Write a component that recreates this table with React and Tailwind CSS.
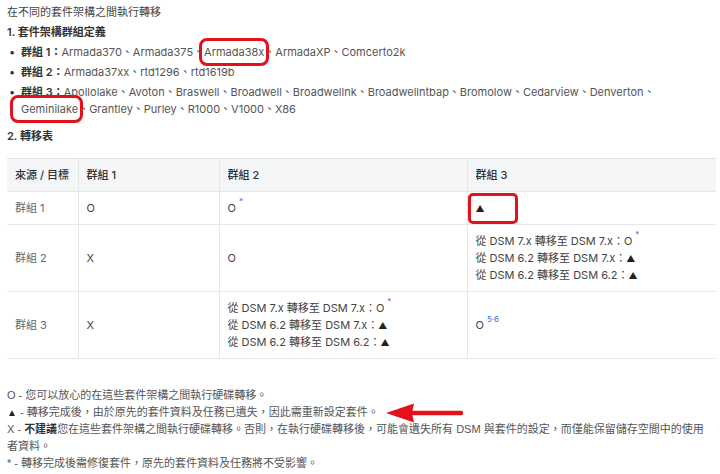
const group3 = ["Apollolake", "Avoton", "Braswell", "Broadwell", "Broadwellnk", "Broadwellntbap", "Bromolow", "Cedarview", "Denverton"];

function Star() {
  return <sup className="ml-[3px] text-[8px] text-[#3b6fe0] align-[4px]">*</sup>;
}

function Tri({ big }) {
  return <span className={big ? "text-[10px] text-[#222]" : "text-[9px] text-[#222]"}>▲</span>;
}

function Box({ children, wide }) {
  return (
    <span
      className={
        "rounded-[3px] py-[2px] outline-3 outline-[#e3111b] outline-offset-[2px] " +
        (wide ? "-ml-[6px] pl-[6px]" : "")
      }
    >
      {children}
    </span>
  );
}

function Bullet({ label, children }) {
  return (
    <li className="flex">
      <span className="w-[14px] pl-[2px] text-[#333]">•</span>
      <div className="flex-1">
        <span className="font-semibold text-[#333]">{label}：</span>
        {children}
      </div>
    </li>
  );
}

export default function App() {
  const td = "px-2 py-[7.5px] align-middle border-t border-[#e6e7ea]";
  const vline = "border-l border-[#e6e7ea]";

  return (
    <div className="w-[720px] h-[474px] overflow-hidden bg-white px-[7px] pt-[4px] font-['Inter','Noto_Sans_CJK_TC',sans-serif] text-[11px] leading-[17px] text-[#555]">
      <p className="text-[#444]">在不同的套件架構之間執行轉移</p>
      <p className="mt-[3px] font-semibold text-[#333]">1. 套件架構群組定義</p>

      <ul className="mt-[3px] space-y-[3px]">
        <Bullet label="群組 1">
          Armada370、Armada375、<Box>Armada38x</Box>、ArmadaXP、Comcerto2k
        </Bullet>
        <Bullet label="群組 2">Armada37xx、rtd1296、rtd1619b</Bullet>
        <Bullet label="群組 3">
          {group3.join("、")}、
          <br />
          <Box wide>Geminilake</Box>、Grantley、Purley、R1000、V1000、X86
        </Bullet>
      </ul>

      <p className="mt-[10px] font-semibold text-[#333]">2. 轉移表</p>

      {/* 轉移表 */}
      <table className="mt-[13px] w-[709px] table-fixed border-collapse border-b border-[#e6e7ea] text-left">
        <colgroup>
          <col className="w-[71px]" />
          <col className="w-[141px]" />
          <col className="w-[248px]" />
          <col className="w-[249px]" />
        </colgroup>
        <thead>
          <tr className="bg-[#f5f6f8] text-[#333]">
            <th className={`${td} font-medium border-[#dfe1e5]`}>來源 / 目標</th>
            <th className={`${td} ${vline} font-medium border-t-[#dfe1e5]`}>群組 1</th>
            <th className={`${td} ${vline} font-medium border-t-[#dfe1e5]`}>群組 2</th>
            <th className={`${td} ${vline} font-medium border-t-[#dfe1e5]`}>群組 3</th>
          </tr>
        </thead>
        <tbody className="text-[#444]">
          <tr>
            <td className={`${td} text-[#666]`}>群組 1</td>
            <td className={`${td} ${vline}`}>O</td>
            <td className={`${td} ${vline}`}>
              O<Star />
            </td>
            <td className={`${td} ${vline} relative`}>
              <Tri />
              <span className="absolute left-0 top-[1px] h-[31px] w-[50px] rounded-[5px] border-3 border-[#e3111b]" />
            </td>
          </tr>
          <tr>
            <td className={`${td} py-2 text-[#666]`}>群組 2</td>
            <td className={`${td} ${vline} py-2`}>X</td>
            <td className={`${td} ${vline} py-2`}>O</td>
            <td className={`${td} ${vline} py-2`}>
              <div>
                從 DSM 7.x 轉移至 DSM 7.x：O<Star />
              </div>
              <div>
                從 DSM 6.2 轉移至 DSM 7.x：<Tri />
              </div>
              <div>
                從 DSM 6.2 轉移至 DSM 6.2：<Tri />
              </div>
            </td>
          </tr>
          <tr>
            <td className={`${td} text-[#666]`}>群組 3</td>
            <td className={`${td} ${vline}`}>X</td>
            <td className={`${td} ${vline}`}>
              <div>
                從 DSM 7.x 轉移至 DSM 7.x：O<Star />
              </div>
              <div>
                從 DSM 6.2 轉移至 DSM 7.x：<Tri />
              </div>
              <div>
                從 DSM 6.2 轉移至 DSM 6.2：<Tri />
              </div>
            </td>
            <td className={`${td} ${vline}`}>
              O<sup className="ml-[3px] text-[8px] text-[#3b6fe0] align-[3px]">5‧6</sup>
            </td>
          </tr>
        </tbody>
      </table>

      {/* 說明 */}
      <div className="mt-[28px] font-['Liberation_Sans','Noto_Sans_CJK_TC',sans-serif] text-[#555]">
        <p>O - 您可以放心的在這些套件架構之間執行硬碟轉移。</p>
        <p>
          <Tri big /> - 轉移完成後，由於原先的套件資料及任務已遺失，因此需重新設定套件。
          <svg className="ml-[6px] -my-[4px] inline-block align-middle" width="78" height="22" viewBox="0 0 78 22">
            <path d="M28 11 H76" stroke="#e3111b" strokeWidth="4.5" strokeLinecap="round" />
            <path d="M1 11 L29 1.5 L27 11 L29 20.5 Z" fill="#e3111b" />
          </svg>
        </p>
        <p>
          X - <span className="font-bold text-[#333]">不建議</span>您在這些套件架構之間執行硬碟轉移。否則，在執行硬碟轉移後，可能會遺失所有 DSM 與套件的設定，而僅能保留儲存空間中的使用
          <br />
          者資料。
        </p>
        <p>* - 轉移完成後需修復套件，原先的套件資料及任務將不受影響。</p>
      </div>
    </div>
  );
}
